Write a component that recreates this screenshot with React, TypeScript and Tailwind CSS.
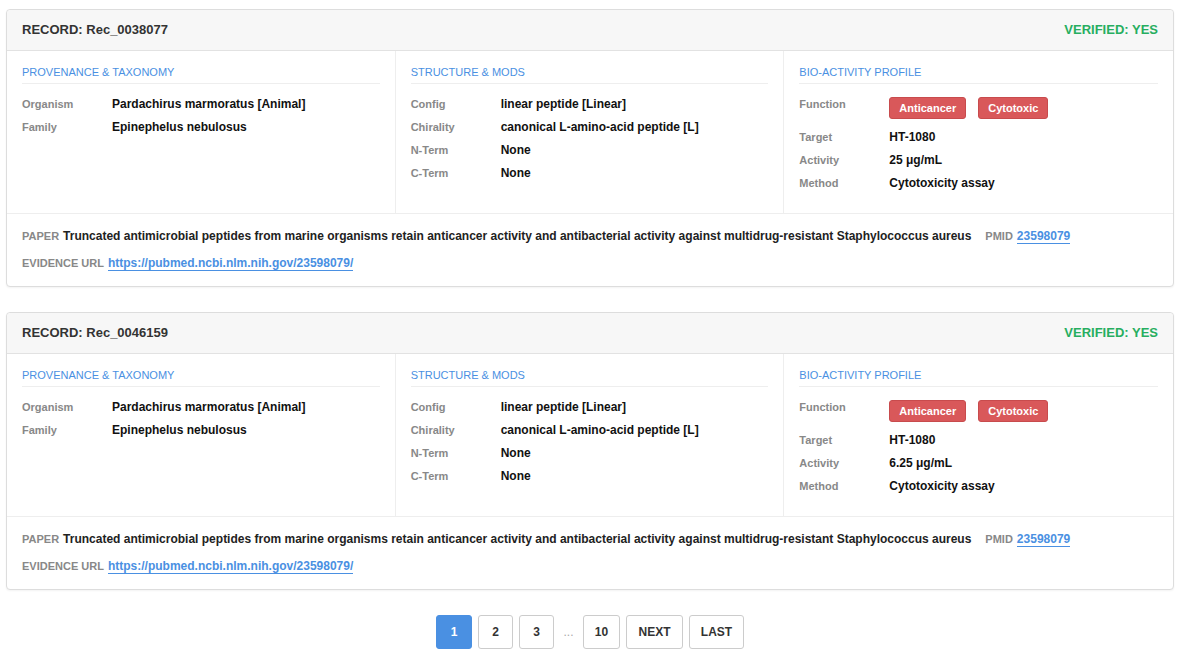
import React from "react";

type Rec = {
  id: string;
  activity: string;
};

const records: Rec[] = [
  { id: "Rec_0038077", activity: "25 μg/mL" },
  { id: "Rec_0046159", activity: "6.25 μg/mL" },
];

const paperTitle =
  "Truncated antimicrobial peptides from marine organisms retain anticancer activity and antibacterial activity against multidrug-resistant Staphylococcus aureus";

function Row({ label, children }: { label: string; children: React.ReactNode }) {
  return (
    <div className="flex items-start mb-[8px] leading-[15px]">
      <div className="w-[90px] shrink-0 text-[11px] font-semibold text-[#888]">{label}</div>
      <div className="text-[12px] font-bold text-[#111]">{children}</div>
    </div>
  );
}

function SectionTitle({ children }: { children: React.ReactNode }) {
  return (
    <div className="text-[11px] leading-[13px] uppercase text-[#4a90e2] pb-[4px] border-b border-[#eee] mb-[13px]">
      {children}
    </div>
  );
}

function Badge({ children }: { children: React.ReactNode }) {
  return (
    <span className="inline-flex items-center h-[22px] px-[9px] rounded-[3px] bg-[#d9585a] border border-[#c84b4d] text-white text-[11px] font-bold">
      {children}
    </span>
  );
}

function RecordCard({ rec }: { rec: Rec }) {
  return (
    <div className="border border-[#ddd] rounded-[4px] bg-white shadow-[0_1px_2px_rgba(0,0,0,0.05)] mb-[25px]">
      <div className="h-[41px] flex items-center justify-between px-[15px] bg-[#f7f7f7] border-b border-[#e2e2e2] rounded-t-[4px]">
        <div className="text-[13px] font-bold text-[#333]">RECORD: {rec.id}</div>
        <div className="text-[13px] font-bold text-[#27ae60]">VERIFIED: YES</div>
      </div>
      <div className="grid grid-cols-3 border-b border-[#eee]">
        <div className="pt-[15px] px-[15px] pb-[14px] border-r border-[#eee]">
          <SectionTitle>Provenance &amp; Taxonomy</SectionTitle>
          <Row label="Organism">Pardachirus marmoratus [Animal]</Row>
          <Row label="Family">Epinephelus nebulosus</Row>
        </div>
        <div className="pt-[15px] px-[15px] pb-[14px] border-r border-[#eee]">
          <SectionTitle>Structure &amp; Mods</SectionTitle>
          <Row label="Config">linear peptide [Linear]</Row>
          <Row label="Chirality">canonical L-amino-acid peptide [L]</Row>
          <Row label="N-Term">None</Row>
          <Row label="C-Term">None</Row>
        </div>
        <div className="pt-[15px] px-[15px] pb-[14px]">
          <SectionTitle>Bio-Activity Profile</SectionTitle>
          <div className="flex items-start mb-[11px]">
            <div className="w-[90px] shrink-0 text-[11px] font-semibold text-[#888] leading-[15px]">Function</div>
            <div className="flex gap-[12px]">
              <Badge>Anticancer</Badge>
              <Badge>Cytotoxic</Badge>
            </div>
          </div>
          <Row label="Target">HT-1080</Row>
          <Row label="Activity">{rec.activity}</Row>
          <Row label="Method">Cytotoxicity assay</Row>
        </div>
      </div>
      <div className="px-[15px] pt-[14px] pb-[15px] flex flex-col gap-[11px]">
        <div className="flex items-center leading-[16px]">
          <span className="text-[11px] font-semibold text-[#888] mr-[4px]">PAPER</span>
          <span className="text-[12px] font-semibold text-[#222]">{paperTitle}</span>
          <span className="text-[11px] font-semibold text-[#888] ml-[14px] mr-[4px]">PMID</span>
          <a className="text-[12px] font-semibold text-[#4a90e2] border-b border-[#4a90e2] leading-[14px]">23598079</a>
        </div>
        <div className="flex items-center leading-[16px]">
          <span className="text-[11px] font-semibold text-[#888] mr-[4px]">EVIDENCE URL</span>
          <a className="text-[12px] font-semibold text-[#4a90e2] border-b border-[#4a90e2] leading-[14px]">
            https://pubmed.ncbi.nlm.nih.gov/23598079/
          </a>
        </div>
      </div>
    </div>
  );
}

function PageBtn({ children, active, w }: { children: React.ReactNode; active?: boolean; w: string }) {
  return (
    <button
      className={
        (active
          ? "bg-[#4a90e2] border-[#4a90e2] text-white "
          : "bg-white border-[#ccc] text-[#333] ") +
        "h-[34px] rounded-[3px] border text-[12px] font-bold flex items-center justify-center " +
        w
      }
    >
      {children}
    </button>
  );
}

export default function App() {
  return (
    <div
      className="min-h-screen bg-white pt-[9px] pl-[6px] pr-[3px]"
      style={{ fontFamily: '"Liberation Sans", Arial, sans-serif' }}
    >
      {records.map(r => (
        <RecordCard key={r.id} rec={r} />
      ))}
      <div className="flex items-center justify-center gap-[6px] mt-[2px]">
        <PageBtn active w="w-[36px]">1</PageBtn>
        <PageBtn w="w-[35px]">2</PageBtn>
        <PageBtn w="w-[35px]">3</PageBtn>
        <span className="w-[17px] text-center text-[12px] text-[#aaa]">...</span>
        <PageBtn w="w-[37px]">10</PageBtn>
        <PageBtn w="w-[57px]">NEXT</PageBtn>
        <PageBtn w="w-[55px]">LAST</PageBtn>
      </div>
    </div>
  );
}
